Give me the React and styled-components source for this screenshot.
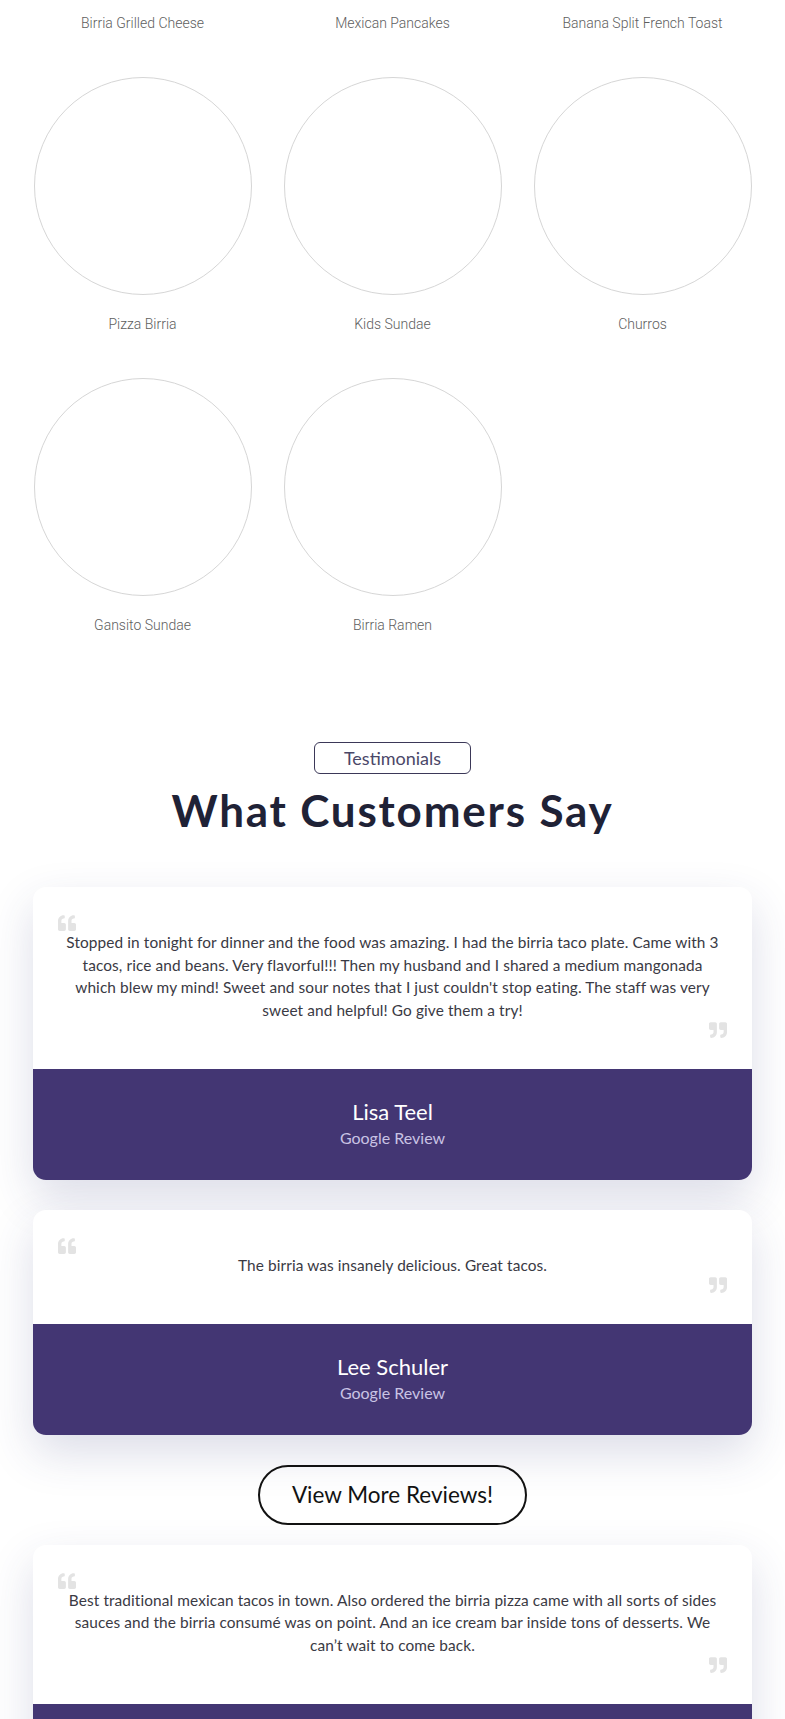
import React from "react";
import styled, { createGlobalStyle } from "styled-components";

const GlobalStyle = createGlobalStyle`
  html, body { margin: 0; padding: 0; background: #ffffff; }
  body { font-family: "Lato", "Noto Sans", sans-serif; overflow-x: hidden; }
  * { box-sizing: border-box; }
`;

const Page = styled.div`
  width: 785px;
  overflow: hidden;
`;

const MenuGrid = styled.div`
  margin-top: -224px;
  padding: 0 33px;
  display: grid;
  grid-template-columns: repeat(3, 1fr);
  column-gap: 31px;
  row-gap: 44px;
`;

const MenuItem = styled.div`
  display: flex;
  flex-direction: column;
  align-items: center;
`;

const Plate = styled.div`
  width: 218px;
  height: 218px;
  border-radius: 50%;
  border: 1px solid #d6d6d6;
  background: #fff;
`;

const MenuLabel = styled.div`
  margin-top: 19px;
  font-family: "Roboto", sans-serif;
  font-weight: 300;
  font-size: 14px;
  line-height: 20px;
  color: #5e5e5e;
  text-align: center;
`;

const Testimonials = styled.section`
  margin-top: 107px;
  display: flex;
  flex-direction: column;
  align-items: center;
`;

const Badge = styled.div`
  width: 157px;
  height: 32px;
  border: 1px solid #3b3858;
  border-radius: 6px;
  display: flex;
  align-items: center;
  justify-content: center;
  font-family: "Lato", sans-serif;
  font-size: 18px;
  color: #4a4768;
`;

const Heading = styled.h2`
  margin: 11px 0 0;
  font-family: "Lato", sans-serif;
  font-weight: 700;
  font-size: 44px;
  line-height: 50px;
  letter-spacing: 1.8px;
  color: #1f2236;
  text-align: center;
`;

const Cards = styled.div`
  margin-top: 52px;
  width: 719px;
  display: flex;
  flex-direction: column;
  align-items: center;
`;

const Card = styled.article`
  width: 100%;
  border-radius: 13px;
  overflow: hidden;
  background: #ffffff;
  box-shadow: 0 18px 45px rgba(45, 55, 120, 0.17);
  margin-bottom: ${(p) => p.$gap}px;
`;

const CardBody = styled.div`
  padding: 28px 25px 31px;
  display: flex;
  flex-direction: column;
`;

const QuoteMark = styled.svg`
  width: 18px;
  height: 16px;
  fill: #e3e3e3;
  align-self: ${(p) => (p.$end ? "flex-end" : "flex-start")};
  display: block;
`;

const ReviewText = styled.p`
  margin: 0;
  padding: 0 4px;
  font-family: "Lato", sans-serif;
  font-size: 15.4px;
  line-height: 22.7px;
  letter-spacing: 0.1px;
  color: #3a3a44;
  text-align: center;
`;

const CardFooter = styled.div`
  background: #433673;
  padding: 29px 20px 31px;
  display: flex;
  flex-direction: column;
  align-items: center;
`;

const Name = styled.div`
  font-family: "Lato", sans-serif;
  font-size: 22px;
  line-height: 28px;
  color: #ffffff;
`;

const Source = styled.div`
  margin-top: 1px;
  font-family: "Lato", sans-serif;
  font-size: 16px;
  line-height: 22px;
  color: #c9c3e4;
`;

const MoreButton = styled.button`
  width: 269px;
  height: 60px;
  border: 2px solid #121212;
  border-radius: 30px;
  background: transparent;
  font-family: "Lato", sans-serif;
  font-size: 22.5px;
  color: #121212;
  margin-bottom: 20px;
  cursor: pointer;
`;

const quotePath =
  "M464 256h-80v-64c0-35.3 28.7-64 64-64h8c13.3 0 24-10.7 24-24V56c0-13.3-10.7-24-24-24h-8c-88.4 0-160 71.6-160 160v240c0 26.5 21.5 48 48 48h128c26.5 0 48-21.5 48-48V304c0-26.5-21.5-48-48-48zm-288 0H96v-64c0-35.3 28.7-64 64-64h8c13.3 0 24-10.7 24-24V56c0-13.3-10.7-24-24-24h-8C71.6 32 0 103.6 0 192v240c0 26.5 21.5 48 48 48h128c26.5 0 48-21.5 48-48V304c0-26.5-21.5-48-48-48z";

const Quote = ({ end }) => (
  <QuoteMark $end={end} viewBox="0 32 512 448" aria-hidden="true">
    <path d={quotePath} transform={end ? "rotate(180 256 256)" : undefined} />
  </QuoteMark>
);

const menu = [
  "Birria Grilled Cheese",
  "Mexican Pancakes",
  "Banana Split French Toast",
  "Pizza Birria",
  "Kids Sundae",
  "Churros",
  "Gansito Sundae",
  "Birria Ramen",
];

const reviews = [
  {
    lines: [
      "Stopped in tonight for dinner and the food was amazing. I had the birria taco plate. Came with 3",
      "tacos, rice and beans. Very flavorful!!! Then my husband and I shared a medium mangonada",
      "which blew my mind! Sweet and sour notes that I just couldn't stop eating. The staff was very",
      "sweet and helpful! Go give them a try!",
    ],
    name: "Lisa Teel",
    gap: 30,
  },
  {
    lines: ["The birria was insanely delicious. Great tacos."],
    name: "Lee Schuler",
    gap: 30,
  },
];

const extra = {
  lines: [
    "Best traditional mexican tacos in town. Also ordered the birria pizza came with all sorts of sides",
    "sauces and the birria consumé was on point. And an ice cream bar inside tons of desserts. We",
    "can’t wait to come back.",
  ],
  name: "Mario G.",
  gap: 0,
};

const ReviewCard = ({ review }) => (
  <Card $gap={review.gap}>
    <CardBody>
      <Quote />
      <ReviewText>
        {review.lines.map((line, i) => (
          <React.Fragment key={i}>
            {i > 0 && <br />}
            {line}
          </React.Fragment>
        ))}
      </ReviewText>
      <Quote end />
    </CardBody>
    <CardFooter>
      <Name>{review.name}</Name>
      <Source>Google Review</Source>
    </CardFooter>
  </Card>
);

export default function App() {
  return (
    <Page>
      <GlobalStyle />
      <MenuGrid>
        {menu.map((label) => (
          <MenuItem key={label}>
            <Plate />
            <MenuLabel>{label}</MenuLabel>
          </MenuItem>
        ))}
      </MenuGrid>
      <Testimonials>
        <Badge>Testimonials</Badge>
        <Heading>What Customers Say</Heading>
        <Cards>
          <ReviewCard review={reviews[0]} />
          <ReviewCard review={reviews[1]} />
          <MoreButton>View More Reviews!</MoreButton>
          <ReviewCard review={extra} />
        </Cards>
      </Testimonials>
    </Page>
  );
}
